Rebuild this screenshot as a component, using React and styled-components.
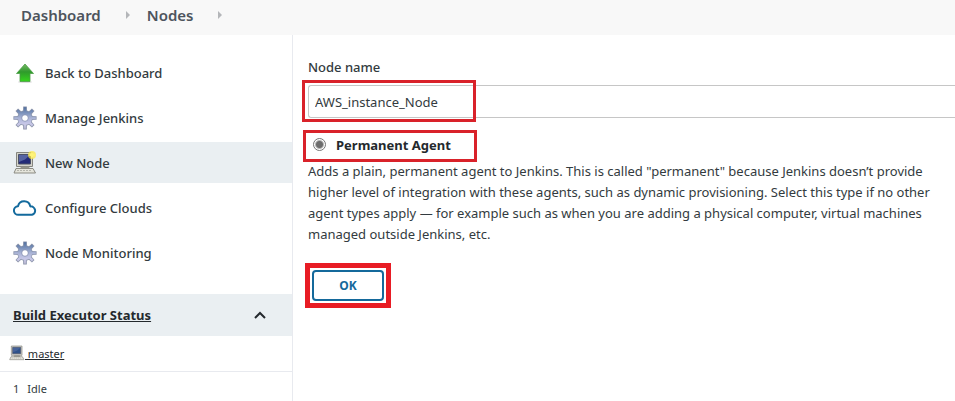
import React from "react";
import styled, { createGlobalStyle } from "styled-components";

const GlobalStyle = createGlobalStyle`
  * { box-sizing: border-box; }
  body {
    margin: 0;
    background: #fff;
    color: #333b40;
    font-family: "Noto Sans", "Open Sans", sans-serif;
    font-size: 13px;
    overflow-x: hidden;
  }
`;

const Page = styled.div`
  display: flex;
  flex-direction: column;
  height: 100vh;
  overflow: hidden;
`;

const Breadcrumbs = styled.nav`
  display: flex;
  align-items: center;
  flex: none;
  height: 35px;
  padding: 0 21px 5px;
  gap: 16px;
  background: #f8f8f8;
`;

const Crumb = styled.a`
  color: #4d545d;
  font-size: 15px;
  line-height: 20px;
  font-weight: 600;
  text-decoration: none;
`;

const CrumbArrow = styled.svg`
  width: 10px;
  height: 8px;
  margin-left: 4px;
`;

const Body = styled.div`
  display: grid;
  grid-template-columns: 293px minmax(0, 1fr);
  flex: 1;
`;

const Sidebar = styled.aside`
  border-right: 1px solid #e8eaef;
`;

const Tasks = styled.nav`
  display: flex;
  flex-direction: column;
  gap: 4px;
  padding: 17px 0 21px;
`;

const Task = styled.a`
  display: flex;
  align-items: center;
  gap: 8px;
  height: 41px;
  padding-left: 13px;
  background: ${(p) => (p.$active ? "#eaeff2" : "transparent")};
  color: #333b40;
  font-size: 13px;
  font-weight: 500;
  text-decoration: none;
  svg { width: 24px; height: 24px; flex: none; }
`;

const PaneHeader = styled.div`
  display: flex;
  align-items: center;
  justify-content: space-between;
  height: 42px;
  padding: 0 25px 1px 13px;
  background: #eaeff2;
`;

const PaneTitle = styled.a`
  color: #24292d;
  font-size: 13px;
  font-weight: 700;
`;

const Collapse = styled.button`
  display: flex;
  padding: 0;
  border: 0;
  background: none;
  svg { width: 14px; height: 10px; }
`;

const Executors = styled.table`
  width: 100%;
  border-collapse: collapse;
  font-size: 11px;
`;

const ExecutorCell = styled.td`
  height: 35px;
  padding: 0 9px;
  border-bottom: 1px solid #e8eaef;
`;

const NodeLink = styled.a`
  display: flex;
  align-items: center;
  color: #24292d;
  white-space: pre;
  svg { width: 16px; height: 16px; }
`;

const Executor = styled.span`
  display: flex;
  gap: 8px;
  padding-left: 4px;
`;

const Main = styled.main`
  padding: 22px 0 0 15px;
`;

const Label = styled.label`
  display: block;
  height: 20px;
  line-height: 20px;
  margin-bottom: 8px;
  font-weight: 500;
`;

const Field = styled.div`
  position: relative;
`;

const TextInput = styled.input`
  display: block;
  width: 100%;
  height: 33px;
  padding: 0 6px;
  border: 1px solid #c6c6c6;
  border-right: 0;
  border-radius: 3px 0 0 3px;
  background: #fff;
  color: #333b40;
  font-family: inherit;
  font-size: 13px;
  outline: 0;
`;

const FieldMark = styled.span`
  position: absolute;
  top: -5px;
  left: -6px;
  width: 174px;
  height: 42px;
  border: 3px solid #d9222a;
  pointer-events: none;
`;

const Choice = styled.label`
  display: flex;
  align-items: center;
  width: 174px;
  height: 32px;
  margin: 12px 0 0 -5px;
  padding: 0 0 2px 7px;
  gap: 10px;
  border: 3px solid #d9222a;
  color: #24292d;
  font-weight: 700;
`;

const Radio = styled.input`
  appearance: none;
  width: 13px;
  height: 13px;
  margin: 0 0 2px;
  border: 1px solid #757575;
  border-radius: 50%;
  background: radial-gradient(circle, #6d6d6d 3px, #fff 5px);
`;

const Description = styled.p`
  max-width: 632px;
  margin: 0;
  margin-top: -1px;
  line-height: 21px;
`;

const SubmitMark = styled.div`
  width: 86px;
  margin: 18px 0 0 -3px;
  padding: 2px;
  border: 5px solid #e81c24;
`;

const Submit = styled.button`
  display: block;
  width: 100%;
  height: 31px;
  padding: 0 0 1px;
  border: 2px solid #14699b;
  border-radius: 4px;
  background: #fff;
  color: #14699b;
  font-family: inherit;
  font-size: 12px;
  font-weight: 700;
`;

function Separator() {
  return (
    <CrumbArrow viewBox="0 0 10 8" aria-hidden="true">
      <path d="M5 0l4 4-4 4z" fill="#b4b6b9" />
    </CrumbArrow>
  );
}

function UpArrow() {
  return (
    <svg viewBox="0 0 24 24" aria-hidden="true">
      <defs>
        <linearGradient id="up" x1="0" y1="0" x2="0" y2="1">
          <stop offset="0" stopColor="#77b866" />
          <stop offset=".45" stopColor="#2f9a2c" />
          <stop offset="1" stopColor="#35d41c" />
        </linearGradient>
      </defs>
      <ellipse cx="12" cy="21" rx="7" ry="1" fill="#ddd" />
      <path d="M12 3L20.500 12.500H17V20.500H7V12.500H3.500z" fill="url(#up)" stroke="#4c9d47" strokeWidth=".8" strokeLinejoin="round" />
    </svg>
  );
}

function Gear({ id }) {
  const teeth = [0, 45, 90, 135, 180, 225, 270, 315];
  return (
    <svg viewBox="0 0 24 24" aria-hidden="true">
      <defs>
        <linearGradient id={id} gradientUnits="userSpaceOnUse" x1="12" y1="0" x2="12" y2="24">
          <stop offset="0" stopColor="#48699a" />
          <stop offset=".3" stopColor="#7e94bd" />
          <stop offset=".5" stopColor="#a9b3d5" />
          <stop offset=".75" stopColor="#c8c8e8" />
          <stop offset="1" stopColor="#b0afc6" />
        </linearGradient>
        <mask id={`${id}-hole`}>
          <path d="M0 0h24v24H0z" fill="#fff" />
          <circle cx="12" cy="12" r="3" fill="#000" />
        </mask>
      </defs>
      <g mask={`url(#${id}-hole)`}>
        <g fill="#8b94aa">
          {teeth.map((a) => (
            <path key={a} d="M10 6L10.200 .4h3.600L14 6z" transform={`rotate(${a} 12 12)`} />
          ))}
          <circle cx="12" cy="12" r="7.700" />
        </g>
        <g fill={`url(#${id})`}>
          <circle cx="12" cy="12" r="7.100" />
          <path d="M10.800 1.200h2.500v5h-2.500zM10.800 18h2.500v4.800h-2.500zM1.200 10.800h5v2.500h-5zM18 10.800h4.800v2.500H18z" />
          <path d="M5.200 3.600l4 4-1.700 1.700-4-4zM18.800 3.600l-4 4 1.700 1.700 4-4zM5.200 20.400l4-4-1.700-1.700-4 4zM18.800 20.400l-4-4 1.700-1.700 4 4z" />
        </g>
      </g>
      <circle cx="12" cy="12" r="3.300" fill="none" stroke="#8a93b2" strokeWidth=".7" />
    </svg>
  );
}

function Computer({ fresh }) {
  return (
    <svg viewBox="0 0 24 24" aria-hidden="true">
      <path d="M3.500 1.500h16v14h-16z" fill="#d4d4cb" stroke="#85857f" />
      <path d="M5.500 3.500h12v9.500h-12z" fill={fresh ? "#232b78" : "#2e5289"} stroke="#4c5268" />
      <path d="M6 4h11l-5 4.500L6 11z" fill="#7181b8" opacity={fresh ? ".65" : ".35"} />
      <path d="M8 15.500h8l1 2.500H7z" fill="#96968c" />
      <path d="M3 17.500h17l2.500 4.500H1z" fill="#e5e5dc" stroke="#8b8b83" strokeLinejoin="round" />
      <path d="M4 19.500h15" stroke="#b5b5ac" strokeDasharray="2 1" />
      {fresh && (
        <>
          <circle cx="19" cy="4" r="4" fill="#ffe943" opacity=".7" />
          <path d="M19 0l1.200 2.800L23 4l-2.800 1.200L19 8l-1.200-2.800L15 4l2.800-1.200z" fill="#fff478" />
        </>
      )}
    </svg>
  );
}

function Cloud() {
  return (
    <svg viewBox="0 0 24 24" aria-hidden="true">
      <path
        d="M19 18.800H5.500A4.300 4.300 0 0 1 5 10.200 6.300 6.300 0 0 1 17.300 10.400 4.300 4.300 0 0 1 19 18.800z"
        fill="none"
        stroke="#136a9d"
        strokeWidth="2"
        strokeLinejoin="round"
      />
    </svg>
  );
}

export default function App() {
  return (
    <Page>
      <GlobalStyle />
      <Breadcrumbs aria-label="Breadcrumb">
        <Crumb href="#dashboard">Dashboard</Crumb>
        <Separator />
        <Crumb href="#nodes">Nodes</Crumb>
        <Separator />
      </Breadcrumbs>
      <Body>
        <Sidebar>
          <Tasks>
            <Task href="#dashboard"><UpArrow />Back to Dashboard</Task>
            <Task href="#manage"><Gear id="gear-manage" />Manage Jenkins</Task>
            <Task href="#new" $active><Computer fresh />New Node</Task>
            <Task href="#clouds"><Cloud />Configure Clouds</Task>
            <Task href="#monitoring"><Gear id="gear-monitor" />Node Monitoring</Task>
          </Tasks>
          <PaneHeader>
            <PaneTitle href="#executors">Build Executor Status</PaneTitle>
            <Collapse type="button" aria-label="Collapse">
              <svg viewBox="0 0 14 10" aria-hidden="true">
                <path d="M2 8l5-5 5 5" fill="none" stroke="#24292d" strokeWidth="2" />
              </svg>
            </Collapse>
          </PaneHeader>
          <Executors>
            <tbody>
              <tr>
                <ExecutorCell><NodeLink href="#master"><Computer /> master</NodeLink></ExecutorCell>
              </tr>
              <tr>
                <ExecutorCell><Executor><span>1</span><span>Idle</span></Executor></ExecutorCell>
              </tr>
            </tbody>
          </Executors>
        </Sidebar>
        <Main>
          <Label htmlFor="node-name">Node name</Label>
          <Field>
            <TextInput id="node-name" type="text" defaultValue="AWS_instance_Node" />
            <FieldMark />
          </Field>
          <Choice>
            <Radio type="radio" name="mode" defaultChecked />
            Permanent Agent
          </Choice>
          <Description>
            Adds a plain, permanent agent to Jenkins. This is called "permanent" because Jenkins doesn’t provide
            higher level of integration with these agents, such as dynamic provisioning. Select this type if no other
            agent types apply — for example such as when you are adding a physical computer, virtual machines
            managed outside Jenkins, etc.
          </Description>
          <SubmitMark>
            <Submit type="submit">OK</Submit>
          </SubmitMark>
        </Main>
      </Body>
    </Page>
  );
}
